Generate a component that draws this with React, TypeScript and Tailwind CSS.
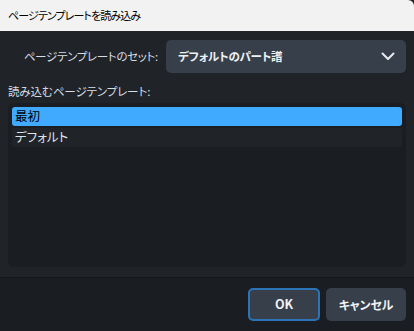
import React from "react";

export default function App() {
  const font =
    "font-['Noto_Sans_CJK_JP','Noto_Sans',sans-serif] [font-feature-settings:'palt']";
  return (
    <div className={`w-[414px] h-[331px] flex flex-col bg-[#202429] overflow-hidden ${font}`}>
      {/* title bar */}
      <div className="h-[31px] shrink-0 bg-[#f2f2f2] flex items-center pl-2 text-[11px] tracking-[-0.9px] text-black rounded-tr-[6px]">
        ページテンプレートを読み込み
      </div>
      {/* body */}
      <div className="flex flex-col px-2 pt-[9px] h-[246px] shrink-0">
        <div className="flex items-center gap-2">
          <div className="w-[150px] text-right text-[11.5px] tracking-[-0.3px] text-[#d8dde3]">
            ページテンプレートのセット:
          </div>
          <div className="flex-1 h-[33px] rounded-[5px] bg-[#363f4a] flex items-center justify-between pl-3 pr-[10px]">
            <span className="text-[11.5px] tracking-[-0.2px] font-bold text-[#eef1f4]">デフォルトのパート譜</span>
            <svg width="14" height="9" viewBox="0 0 14 9" className="mr-[1px]">
              <path d="M1.5 1.5 L7 7 L12.5 1.5" fill="none" stroke="#e8ecf0" strokeWidth="2" strokeLinecap="round" strokeLinejoin="round" />
            </svg>
          </div>
        </div>
        <div className="mt-[10px] text-[11.5px] tracking-[-0.1px] text-[#d8dde3] leading-[16px]">
          読み込むページテンプレート:
        </div>
        <div className="mt-[4px] h-[164px] rounded-[6px] bg-[#1a1d21] p-[4px] flex flex-col gap-[2px]">
          <div className="h-[19px] rounded-[3px] bg-[#40aaff] flex items-center pl-[3px] text-[12.5px] text-black">
            最初
          </div>
          <div className="h-[19px] rounded-[3px] bg-[#202429] flex items-center pl-[3px] text-[12.5px] text-[#dfe3e8]">
            デフォルト
          </div>
        </div>
      </div>
      <div className="h-px bg-[#141619] shrink-0" />
      {/* footer */}
      <div className="flex-1 bg-[#1a1d21] flex justify-end items-start pt-[10px] pr-2 gap-[6px]">
        <button className="w-[72px] h-[33px] rounded-[5px] bg-[#363f4a] border-2 border-[#2b74b8] text-[12.5px] font-bold text-[#eef1f4]">
          OK
        </button>
        <button className="w-[80px] h-[33px] rounded-[5px] bg-[#363f4a] text-[12px] tracking-[-0.2px] font-bold text-[#eef1f4]">
          キャンセル
        </button>
      </div>
    </div>
  );
}
